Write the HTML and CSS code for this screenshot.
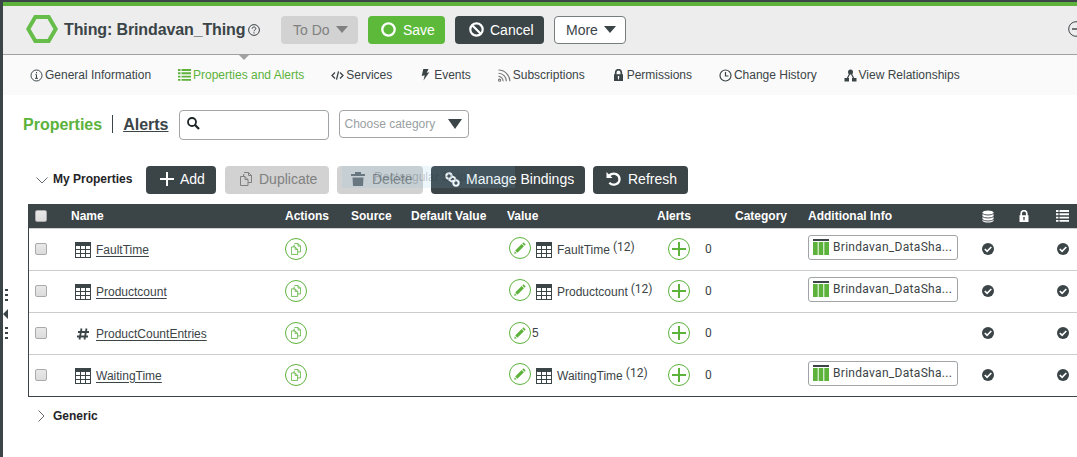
FILE: index.html
```
<!DOCTYPE html>
<html lang="en">
<head>
    <meta charset="UTF-8">
    <meta name="viewport" content="width=device-width, initial-scale=1.0">
    <title>Thing: Brindavan_Thing</title>
    <link rel="stylesheet" href="styles.css">
</head>
<body>
    <!-- shared icons -->
    <svg class="sprite" aria-hidden="true">
        <symbol id="i-table" viewBox="0 0 16 16">
            <path d="M0 0h16v16H0z" fill="#3b4447"/>
            <path d="M1 4h4v3H1zM6 4h4v3H6zM11 4h4v3h-4zM1 8h4v3H1zM6 8h4v3H6zM11 8h4v3h-4zM1 12h4v3H1zM6 12h4v3H6zM11 12h4v3h-4z" fill="#fff"/>
        </symbol>
        <symbol id="i-copy" viewBox="0 0 12 14">
            <path d="M.5 4.500h4.500l3 3v6H.5zM5 4.500v3h3M3.500 4.500v-2h1M4 .5h4.500l3 3v7H8M8.500.5v3h3" fill="none" stroke="currentColor"/>
        </symbol>
        <symbol id="i-pencil" viewBox="0 0 12 12">
            <path d="M9.500.3l2.200 2.200-1.200 1.200-2.200-2.200zM7.700 2.100l2.200 2.200-6.500 6.500-2.200-2.200zM.8 9.300l1.900 1.900-2.500.6z" fill="currentColor"/>
        </symbol>
        <symbol id="i-plus" viewBox="0 0 14 14">
            <path d="M7 0v14M0 7h14" stroke="currentColor" stroke-width="2"/>
        </symbol>
        <symbol id="i-check" viewBox="0 0 12 12">
            <circle cx="6" cy="6" r="6" fill="#3b4447"/>
            <path d="M2.800 6l2.300 2.300 4.200-4.300" fill="none" stroke="#fff" stroke-width="1.700"/>
        </symbol>
        <symbol id="i-list" viewBox="0 0 13 12">
            <path d="M0 1h2.500M0 4.300h2.500M0 7.600h2.500M0 10.900h2.500M3.500 1H13M3.500 4.300H13M3.500 7.600H13M3.500 10.900H13" stroke="currentColor" stroke-width="1.900"/>
        </symbol>
        <symbol id="i-lock" viewBox="0 0 10 12">
            <path d="M2.200 6V3.500a2.800 2.800 0 0 1 5.600 0V6" fill="none" stroke="currentColor" stroke-width="1.700"/>
            <path fill-rule="evenodd" d="M.5 5.200h9V12h-9zM4.300 7v1.500l.3 2h.8l.3-2V7z" fill="currentColor"/>
        </symbol>
        <symbol id="i-share" viewBox="0 0 16 16">
            <path d="M0 0h16v2H0z" fill="#3b4447"/>
            <path d="M0 3h4.700v13H0zM5.700 3h4.600v13H5.700zM11.300 3H16v13h-4.700z" fill="#5cb23b"/>
        </symbol>
    </svg>

    <div class="window">
        <header class="header">
            <svg class="entity-icon" viewBox="0 0 32 28"><path d="M9.300 2h13.400L29.700 14l-7 12H9.300l-7-12z" fill="none" stroke="#67bd49" stroke-width="4"/></svg>
            <h1>Thing: Brindavan_Thing</h1>
            <svg class="help-icon" viewBox="0 0 12 12" fill="none" stroke="#3b4447"><circle cx="6" cy="6" r="5.400"/><path d="M4.200 4.700c0-2.300 3.600-2.300 3.600 0 0 1.200-1.800 1.200-1.800 2.600M6 8.300v1.200"/></svg>
            <button class="btn disabled todo">To Do <span class="caret"></span></button>
            <button class="btn green save"><svg width="15" height="15" viewBox="0 0 15 15"><circle cx="7.500" cy="7.500" r="6.200" fill="none" stroke="#fff" stroke-width="2.300"/></svg>Save</button>
            <button class="btn cancel"><svg width="15" height="15" viewBox="0 0 15 15" fill="none" stroke="#fff" stroke-width="2.200"><circle cx="7.500" cy="7.500" r="6.200"/><path d="M3 3l9 9"/></svg>Cancel</button>
            <button class="btn outline more">More <span class="caret"></span></button>
            <svg class="collapse-icon" viewBox="0 0 16 16" fill="none" stroke="#3b4447"><circle cx="8" cy="8" r="7.300"/><path d="M4 8h8" stroke-width="1.400"/></svg>
            <span class="notch"></span>
        </header>

        <nav class="tabs">
            <a><svg width="13" height="13" viewBox="0 0 13 13" fill="none" stroke="#3b4447"><circle cx="6.500" cy="6.500" r="5.500"/><path d="M6.500 3v1.300M5.300 5.700h1.200v3.500M5 9.300h3"/></svg>General Information</a>
            <a class="active"><svg width="13" height="12"><use href="#i-list"/></svg>Properties and Alerts</a>
            <a><svg width="13" height="9" viewBox="0 0 13 9" fill="none" stroke="#3b4447" stroke-width="1.300"><path d="M4 1.500l-3 3 3 3M7.500.3l-2 8.400M9 1.500l3 3-3 3"/></svg>Services</a>
            <a><svg width="13" height="12" viewBox="0 0 13 12"><path d="M4.300 0H9.500L7.700 3.800l2.600-.5L4.500 11.500l1.200-5.300-3 .7z" fill="#3b4447"/></svg>Events</a>
            <a><svg width="13" height="13" viewBox="0 0 13 13" fill="none" stroke="#777" stroke-width="1.100"><circle cx="1.600" cy="11.200" r="1.100"/><path d="M.5 7.400a4.600 4.600 0 0 1 4.600 4.800M.5 4.200a8 8 0 0 1 7.900 8M.5 1a11.400 11.400 0 0 1 11.400 11.200"/></svg>Subscriptions</a>
            <a><svg width="13" height="12"><use href="#i-lock"/></svg>Permissions</a>
            <a><svg width="13" height="13" viewBox="0 0 13 13" fill="none" stroke="#3b4447" stroke-width="1.200"><circle cx="6.500" cy="6.500" r="5.500"/><path d="M6.500 3v4h3"/></svg>Change History</a>
            <a><svg width="13" height="13" viewBox="0 0 13 13" fill="#3b4447"><circle cx="6.500" cy="3" r="2.500"/><path d="M.5 9h4.500v3.500H.5zM8 9h4.500v3.500H8z"/><path d="M6 4L3 10M7 4l3 6" stroke="#3b4447" stroke-width="1.200"/></svg>View Relationships</a>
        </nav>

        <main>
            <div class="filters">
                <a class="view current">Properties</a>
                <a class="view">Alerts</a>
                <div class="search"><svg width="13" height="13" viewBox="0 0 13 13" fill="none" stroke="#1f2527"><circle cx="5" cy="5" r="4" stroke-width="1.800"/><path d="M8 8l4 4" stroke-width="2.300"/></svg></div>
                <div class="select">Choose category<span class="caret"></span></div>
            </div>

            <div class="toolbar">
                <svg class="chevron" width="12" height="7" viewBox="0 0 12 7"><path d="M.5.5L6 6 11.500.5"/></svg>
                <h2>My Properties</h2>
                <button class="btn add"><svg width="14" height="14"><use href="#i-plus"/></svg>Add</button>
                <button class="btn disabled duplicate"><svg width="12" height="14"><use href="#i-copy"/></svg>Duplicate</button>
                <button class="btn disabled delete"><svg width="14" height="14" viewBox="0 0 14 14" fill="#666d70"><path d="M0 2h4V0h6v2h4v2H0zM1.500 5.500h11L12 14H2z"/></svg>Delete</button>
                <button class="btn manage"><svg width="15" height="15" viewBox="0 0 15 15" fill="none" stroke="#fff" stroke-width="2"><circle cx="4" cy="4" r="2.700"/><circle cx="11" cy="11" r="2.700"/><path d="M3.700 7.500l3 2 2-.8M7 4.500l2.800 1.200.7 2.600"/></svg>Manage Bindings</button>
                <button class="btn refresh"><svg width="15" height="14" viewBox="0 0 15 14"><path d="M3 3.500C8-.5 13.500 2.500 13.500 7.200c0 5-6.500 7.300-10.200 3.600" fill="none" stroke="#fff" stroke-width="2.300"/><path d="M.5 0v6h6z" fill="#fff"/></svg>Refresh</button>
                <div class="snip">Rectangular Snip</div>
            </div>

            <table class="props">
                <colgroup>
                    <col class="c-check"><col class="c-name"><col class="c-actions"><col class="c-source"><col class="c-default"><col class="c-value"><col class="c-alerts"><col class="c-category"><col class="c-info"><col class="c-db"><col class="c-lock"><col class="c-list">
                </colgroup>
                <thead>
                    <tr>
                        <th><span class="box"></span></th>
                        <th>Name</th>
                        <th>Actions</th>
                        <th>Source</th>
                        <th>Default Value</th>
                        <th>Value</th>
                        <th>Alerts</th>
                        <th>Category</th>
                        <th>Additional Info</th>
                        <th class="flag"><svg width="12" height="13" viewBox="0 0 12 13"><path d="M.5 2.500C.5-.3 11.500-.3 11.500 2.500v8c0 2.800-11 2.800-11 0z" fill="#fff"/><path d="M.3 3.500c2 2 9.400 2 11.400 0M.3 6.500c2 2 9.400 2 11.400 0M.3 9.500c2 2 9.400 2 11.400 0" fill="none" stroke="#3b4447" stroke-width=".9"/></svg></th>
                        <th class="flag"><svg width="10" height="12"><use href="#i-lock"/></svg></th>
                        <th class="flag"><svg width="13" height="12"><use href="#i-list"/></svg></th>
                    </tr>
                </thead>
                <tbody>
                    <tr>
                        <td class="up"><span class="box"></span></td>
                        <td><div class="name"><svg width="16" height="16"><use href="#i-table"/></svg><a>FaultTime</a></div></td>
                        <td class="up"><span class="round"><svg width="10" height="12"><use href="#i-copy"/></svg></span></td>
                        <td></td>
                        <td></td>
                        <td><div class="value"><span class="round raised"><svg width="12" height="12"><use href="#i-pencil"/></svg></span><svg class="type" width="16" height="16"><use href="#i-table"/></svg><span>FaultTime</span><span class="count">(12)</span></div></td>
                        <td class="up"><div class="alert"><span class="round"><svg width="14" height="14"><use href="#i-plus"/></svg></span>0</div></td>
                        <td></td>
                        <td><div class="chip"><svg width="16" height="16"><use href="#i-share"/></svg>Brindavan_DataSha...</div></td>
                        <td class="flag up"><svg width="12" height="12"><use href="#i-check"/></svg></td>
                        <td></td>
                        <td class="flag up"><svg width="12" height="12"><use href="#i-check"/></svg></td>
                    </tr>
                    <tr>
                        <td class="up"><span class="box"></span></td>
                        <td><div class="name"><svg width="16" height="16"><use href="#i-table"/></svg><a>Productcount</a></div></td>
                        <td class="up"><span class="round"><svg width="10" height="12"><use href="#i-copy"/></svg></span></td>
                        <td></td>
                        <td></td>
                        <td><div class="value"><span class="round raised"><svg width="12" height="12"><use href="#i-pencil"/></svg></span><svg class="type" width="16" height="16"><use href="#i-table"/></svg><span>Productcount</span><span class="count">(12)</span></div></td>
                        <td class="up"><div class="alert"><span class="round"><svg width="14" height="14"><use href="#i-plus"/></svg></span>0</div></td>
                        <td></td>
                        <td><div class="chip"><svg width="16" height="16"><use href="#i-share"/></svg>Brindavan_DataSha...</div></td>
                        <td class="flag up"><svg width="12" height="12"><use href="#i-check"/></svg></td>
                        <td></td>
                        <td class="flag up"><svg width="12" height="12"><use href="#i-check"/></svg></td>
                    </tr>
                    <tr>
                        <td class="up"><span class="box"></span></td>
                        <td><div class="name"><svg width="16" height="16" viewBox="0 0 16 16"><path d="M6.500 2.500L4.500 13.500M11.500 2.500L9.500 13.500M3 6h11M2 10.500h11" stroke="#3b4447" stroke-width="1.800"/></svg><a>ProductCountEntries</a></div></td>
                        <td class="up"><span class="round"><svg width="10" height="12"><use href="#i-copy"/></svg></span></td>
                        <td></td>
                        <td></td>
                        <td class="up"><div class="value"><span class="round"><svg width="12" height="12"><use href="#i-pencil"/></svg></span><span class="number">5</span></div></td>
                        <td class="up"><div class="alert"><span class="round"><svg width="14" height="14"><use href="#i-plus"/></svg></span>0</div></td>
                        <td></td>
                        <td></td>
                        <td class="flag up"><svg width="12" height="12"><use href="#i-check"/></svg></td>
                        <td></td>
                        <td class="flag up"><svg width="12" height="12"><use href="#i-check"/></svg></td>
                    </tr>
                    <tr>
                        <td class="up"><span class="box"></span></td>
                        <td><div class="name"><svg width="16" height="16"><use href="#i-table"/></svg><a>WaitingTime</a></div></td>
                        <td class="up"><span class="round"><svg width="10" height="12"><use href="#i-copy"/></svg></span></td>
                        <td></td>
                        <td></td>
                        <td><div class="value"><span class="round raised"><svg width="12" height="12"><use href="#i-pencil"/></svg></span><svg class="type" width="16" height="16"><use href="#i-table"/></svg><span>WaitingTime</span><span class="count">(12)</span></div></td>
                        <td class="up"><div class="alert"><span class="round"><svg width="14" height="14"><use href="#i-plus"/></svg></span>0</div></td>
                        <td></td>
                        <td><div class="chip"><svg width="16" height="16"><use href="#i-share"/></svg>Brindavan_DataSha...</div></td>
                        <td class="flag up"><svg width="12" height="12"><use href="#i-check"/></svg></td>
                        <td></td>
                        <td class="flag up"><svg width="12" height="12"><use href="#i-check"/></svg></td>
                    </tr>
                </tbody>
            </table>

            <div class="generic">
                <svg class="chevron" width="7" height="12" viewBox="0 0 7 12"><path d="M.5.5L6 6 .5 11.500"/></svg>
                <h2>Generic</h2>
            </div>
        </main>

        <svg class="splitter" width="8" height="52" viewBox="0 0 8 52" fill="#3b4447"><path d="M2 1h3v2H2zM2 6h3v2H2zM2 11h3v2H2zM0 26l5-5v10zM2 39h3v2H2zM2 44h3v2H2zM2 49h3v2H2z"/></svg>
    </div>
</body>
</html>
```

FILE: styles.css
```
* {
    box-sizing: border-box;
}
body {
    margin: 0;
    font-family: "Liberation Sans", Arial, sans-serif;
    font-size: 12px;
    color: #3b4447;
    background-color: #fff;
}
.sprite {
    display: none;
}
svg {
    display: block;
    flex: none;
}
.window {
    position: relative;
    height: 457px;
    overflow: hidden;
    border-left: 3px solid #3b4447;
    border-top: 2px solid #3b4447;
}
.header {
    position: relative;
    display: flex;
    align-items: center;
    height: 53px;
    padding-left: 23px;
    background-color: #ededed;
    border-top: 4px solid #5cb23b;
    border-bottom: 1px solid #a0a0a0;
}
.entity-icon {
    width: 32px;
    height: 28px;
    margin-top: -2px;
}
h1 {
    width: 182px;
    margin: 0 2px 0 6px;
    font-size: 16px;
    letter-spacing: -0.12px;
    white-space: nowrap;
}
.help-icon {
    width: 12px;
    height: 12px;
    margin-right: 21px;
}
.notch {
    position: absolute;
    left: 235px;
    top: 48px;
    border: 6px solid transparent;
    border-top-color: #a0a0a0;
    border-bottom: none;
}
.collapse-icon {
    width: 16px;
    height: 16px;
    margin: -2px -7px 0 auto;
}

/* buttons */
.btn {
    display: flex;
    align-items: center;
    flex: none;
    height: 28px;
    padding: 0 0 2px;
    border: none;
    border-radius: 4px;
    background-color: #3b4447;
    color: #fff;
    font-family: inherit;
    font-size: 14px;
    white-space: nowrap;
}
.btn.disabled {
    background-color: #d2d2d2;
    color: #808080;
}
.btn.green {
    background-color: #5cb93a;
}
.btn.outline {
    background-color: #fff;
    border: 1px solid #777c7e;
    color: #3b4447;
}
.header .btn {
    margin-right: 10px;
}
.header .btn,
.header .btn.outline {
    padding-bottom: 1px;
}
.caret {
    margin-left: 6px;
    border: 6px solid transparent;
    border-top: 7px solid currentColor;
    border-bottom: none;
}
.todo {
    width: 77px;
    padding-left: 12px;
}
.save {
    width: 77px;
    padding-left: 13px;
    gap: 7px;
}
.cancel {
    width: 89px;
    padding-left: 14px;
    gap: 6px;
}
.more {
    width: 72px;
    padding-left: 11px;
}

/* tabs */
.tabs {
    display: flex;
    align-items: center;
    gap: 26.9px;
    height: 40px;
    padding-left: 27px;
    background-color: #fafafa;
}
.tabs a {
    display: flex;
    align-items: center;
    gap: 2px;
    white-space: nowrap;
}
.tabs .active {
    color: #5cb23b;
}

/* filters */
.filters {
    display: flex;
    align-items: flex-start;
    height: 71px;
    padding: 15px 0 0 20px;
}
.view {
    height: 18px;
    margin-top: 5px;
    padding-right: 10px;
    font-size: 16px;
    font-weight: bold;
    line-height: 20px;
    text-decoration: underline;
}
.view.current {
    margin-right: 10px;
    border-right: 1px solid #3b4447;
    color: #5cb23b;
    text-decoration: none;
}
.search {
    width: 150px;
    height: 30px;
    margin-right: 10px;
    padding: 6px 7px;
    border: 1px solid #a0a4a6;
    border-radius: 4px;
}
.select {
    display: flex;
    align-items: center;
    justify-content: space-between;
    width: 130px;
    height: 28px;
    padding: 0 6px 0 5px;
    border: 1px solid #a0a4a6;
    border-radius: 4px;
    color: #99a0a2;
}
.select .caret {
    border-width: 10px 7px 0;
    border-top-color: #3b4447;
}

/* toolbar */
.toolbar {
    position: relative;
    display: flex;
    align-items: center;
    height: 28px;
    padding-left: 33px;
}
.chevron path {
    fill: none;
    stroke: #666d70;
}
h2 {
    margin: 0;
    font-size: 12px;
    color: #1f2527;
    white-space: nowrap;
}
.toolbar h2 {
    width: 93px;
    margin-left: 5px;
    margin-top: -2px;
}
.add {
    width: 70px;
    margin-right: 9px;
    padding-left: 14px;
    gap: 6px;
}
.duplicate {
    width: 104px;
    margin-right: 8px;
    padding-left: 15px;
    gap: 7px;
}
.delete {
    width: 86px;
    margin-right: 8px;
    padding-left: 14px;
    gap: 7px;
}
.manage {
    width: 154px;
    margin-right: 8px;
    padding-left: 14px;
    gap: 6px;
}
.refresh {
    width: 95px;
    padding-left: 13px;
    gap: 7px;
}
/* fading label over the buttons */
.snip {
    position: absolute;
    left: 339px;
    top: 0;
    width: 173px;
    height: 22px;
    padding-left: 32px;
    background-color: rgba(130, 190, 230, 0.14);
    color: rgba(40, 50, 60, 0.25);
    line-height: 22px;
}

/* properties table */
.props {
    width: 1058px;
    margin: 10px 0 0 25px;
    table-layout: fixed;
    border-collapse: separate;
    border-spacing: 0;
    border-left: 1px solid #3b4447;
}
.c-check { width: 36px; }
.c-name { width: 214px; }
.c-actions { width: 66px; }
.c-source { width: 60px; }
.c-default { width: 96px; }
.c-value { width: 150px; }
.c-alerts { width: 78px; }
.c-category { width: 73px; }
.c-info { width: 164px; }
.c-db { width: 43px; }
.c-lock { width: 30px; }
.c-list { width: 47px; }
.props th {
    height: 25px;
    padding: 0 0 0 6px;
    background-color: #3b4447;
    border-bottom: 1px solid #d0d0d0;
    color: #fff;
    text-align: left;
    white-space: nowrap;
}
.props td {
    height: 42px;
    padding: 0 0 0 6px;
    border-bottom: 1px solid #ccc;
}
.props tr:last-child td {
    border-bottom-color: #3b4447;
}
.props .flag {
    padding: 0;
}
.props .up {
    padding-bottom: 2px;
}
.flag svg {
    margin: 0 auto;
}
.box {
    display: block;
    width: 12px;
    height: 12px;
    border: 1px solid #aaa;
    border-radius: 2px;
    background: linear-gradient(#e8e8e8, #dcdcdc);
}
.name {
    display: flex;
    align-items: center;
    gap: 5px;
    padding-left: 4px;
}
.name a {
    text-decoration: underline;
    text-underline-offset: 2px;
}
.round {
    display: flex;
    align-items: center;
    justify-content: center;
    flex: none;
    width: 22px;
    height: 22px;
    border: 1px solid #5cb23b;
    border-radius: 50%;
    color: #5cb23b;
}
.value {
    display: flex;
    align-items: center;
    padding-left: 2px;
    white-space: nowrap;
}
.raised {
    margin-top: -3px;
}
.type {
    margin: 0 5px;
}
.count {
    margin: -5px 0 0 3px;
    font-family: Roboto, sans-serif;
}
.number {
    margin-left: 1px;
}
.alert {
    display: flex;
    align-items: center;
    gap: 15px;
    padding-left: 11px;
    font-family: Roboto, sans-serif;
}
.chip {
    display: flex;
    align-items: center;
    gap: 4px;
    width: 150px;
    height: 25px;
    margin-top: -4px;
    padding: 0 0 1px 4px;
    border: 1px solid #a0a4a6;
    border-radius: 3px;
    font-family: Roboto, sans-serif;
    letter-spacing: 0.3px;
    white-space: nowrap;
}
.generic {
    display: flex;
    align-items: center;
    gap: 8px;
    padding: 12px 0 0 35px;
}

/* side panel handle */
.splitter {
    position: absolute;
    left: 0;
    top: 286px;
}
```
